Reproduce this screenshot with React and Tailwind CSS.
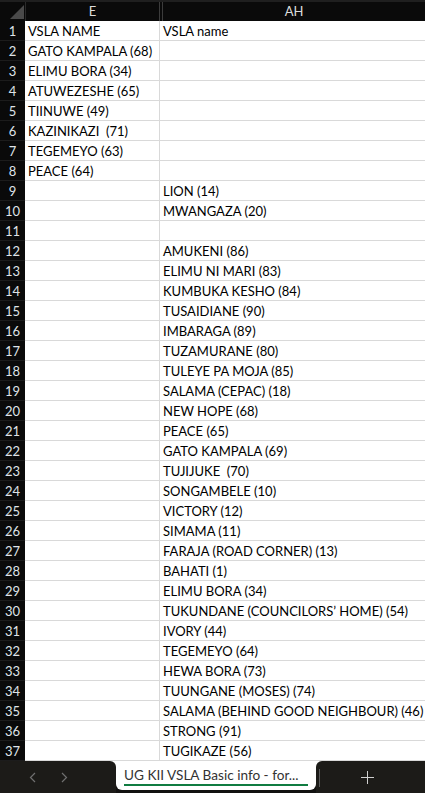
import React from 'react';

const colE = {
    1: 'VSLA NAME',
    2: 'GATO KAMPALA (68)',
    3: 'ELIMU BORA (34)',
    4: 'ATUWEZESHE (65)',
    5: 'TIINUWE (49)',
    6: 'KAZINIKAZI  (71)',
    7: 'TEGEMEYO (63)',
    8: 'PEACE (64)',
};

const colAH = {
    1: 'VSLA name',
    9: 'LION (14)',
    10: 'MWANGAZA (20)',
    12: 'AMUKENI (86)',
    13: 'ELIMU NI MARI (83)',
    14: 'KUMBUKA KESHO (84)',
    15: 'TUSAIDIANE (90)',
    16: 'IMBARAGA (89)',
    17: 'TUZAMURANE (80)',
    18: 'TULEYE PA MOJA (85)',
    19: 'SALAMA (CEPAC) (18)',
    20: 'NEW HOPE (68)',
    21: 'PEACE (65)',
    22: 'GATO KAMPALA (69)',
    23: 'TUJIJUKE  (70)',
    24: 'SONGAMBELE (10)',
    25: 'VICTORY (12)',
    26: 'SIMAMA (11)',
    27: 'FARAJA (ROAD CORNER) (13)',
    28: 'BAHATI (1)',
    29: 'ELIMU BORA (34)',
    30: 'TUKUNDANE (COUNCILORS\u2019 HOME) (54)',
    31: 'IVORY (44)',
    32: 'TEGEMEYO (64)',
    33: 'HEWA BORA (73)',
    34: 'TUUNGANE (MOSES) (74)',
    35: 'SALAMA (BEHIND GOOD NEIGHBOUR) (46)',
    36: 'STRONG (91)',
    37: 'TUGIKAZE (56)',
};

const rows = Array.from({ length: 37 }, (_, i) => i + 1);

const font = { fontFamily: 'Lato, "Liberation Sans", sans-serif' };

const App = () => {
    return (
        <div className="w-[425px] h-[793px] overflow-hidden bg-white flex flex-col text-[13px] leading-[13px]" style={font}>
            {/* column headers */}
            <div className="h-[2px] bg-[#1f1f1f] shrink-0" />
            <div className="h-[19px] flex bg-[#0a0a0a] text-[#dcdcdc] shrink-0">
                <div className="w-[25px] shrink-0 relative">
                    <div className="absolute right-[1px] bottom-[2px] w-0 h-0 border-l-[14px] border-l-transparent border-b-[14px] border-b-[#4a4a4a]" />
                </div>
                <div className="w-[134px] shrink-0 flex items-center justify-center border-l border-[#2a2a2a]">E</div>
                <div className="w-px shrink-0 bg-[#3c3c3c]" />
                <div className="w-[2px] shrink-0" />
                <div className="w-px shrink-0 bg-[#3c3c3c]" />
                <div className="flex-1 flex items-center justify-center">AH</div>
            </div>

            {/* grid */}
            <div className="flex-1 overflow-hidden">
                {rows.map((r) => (
                    <div key={r} className="h-[20px] flex">
                        <div className="w-[25px] shrink-0 bg-[#0a0a0a] text-[#dfe3e8] flex items-end justify-center pb-[2px] border-b border-[#1c1c1c]">
                            {r}
                        </div>
                        <div className="w-[135px] shrink-0 border-b border-r border-[#d9d9d9] flex items-end pl-[3px] pb-[2px] whitespace-pre text-black">
                            {colE[r] || ''}
                        </div>
                        <div className="flex-1 min-w-0 border-b border-[#d9d9d9] flex items-end pl-[3px] pb-[2px] whitespace-pre text-black">
                            {colAH[r] || ''}
                        </div>
                    </div>
                ))}
            </div>

            {/* sheet tabs */}
            <div className="h-[32px] flex bg-white shrink-0">
                <div className="w-[116px] shrink-0 bg-[#1c1b18] rounded-tr-[6px] flex items-center text-[#707070]">
                    <svg className="ml-[29px]" width="7" height="11" viewBox="0 0 7 11" fill="none" stroke="currentColor" strokeWidth="1.2">
                        <path d="M6 1 L1.5 5.5 L6 10" />
                    </svg>
                    <svg className="ml-[25px]" width="7" height="11" viewBox="0 0 7 11" fill="none" stroke="currentColor" strokeWidth="1.2">
                        <path d="M1 1 L5.5 5.5 L1 10" />
                    </svg>
                </div>
                <div className="w-[200px] shrink-0 bg-[#121110]">
                    <div className="h-[29px] bg-white rounded-b-[6px] px-[8px] flex flex-col">
                        <div className="h-[21px] flex items-end text-[#333] text-[13.6px] whitespace-nowrap">UG KII VSLA Basic info - for...</div>
                        <div className="h-[2px] mt-[2px] bg-[#107c41]" />
                    </div>
                </div>
                <div className="flex-1 bg-[#1c1b18] rounded-tl-[6px] flex items-center">
                    <div className="w-px h-[18px] bg-[#5a5a5a] ml-[3px] mb-[-1px]" />
                    <svg className="ml-[41px]" width="13" height="13" viewBox="0 0 13 13" stroke="#d0d0d0" strokeWidth="1">
                        <path d="M6.5 0 V13 M0 6.5 H13" />
                    </svg>
                </div>
            </div>
        </div>
    );
};

export default App;
